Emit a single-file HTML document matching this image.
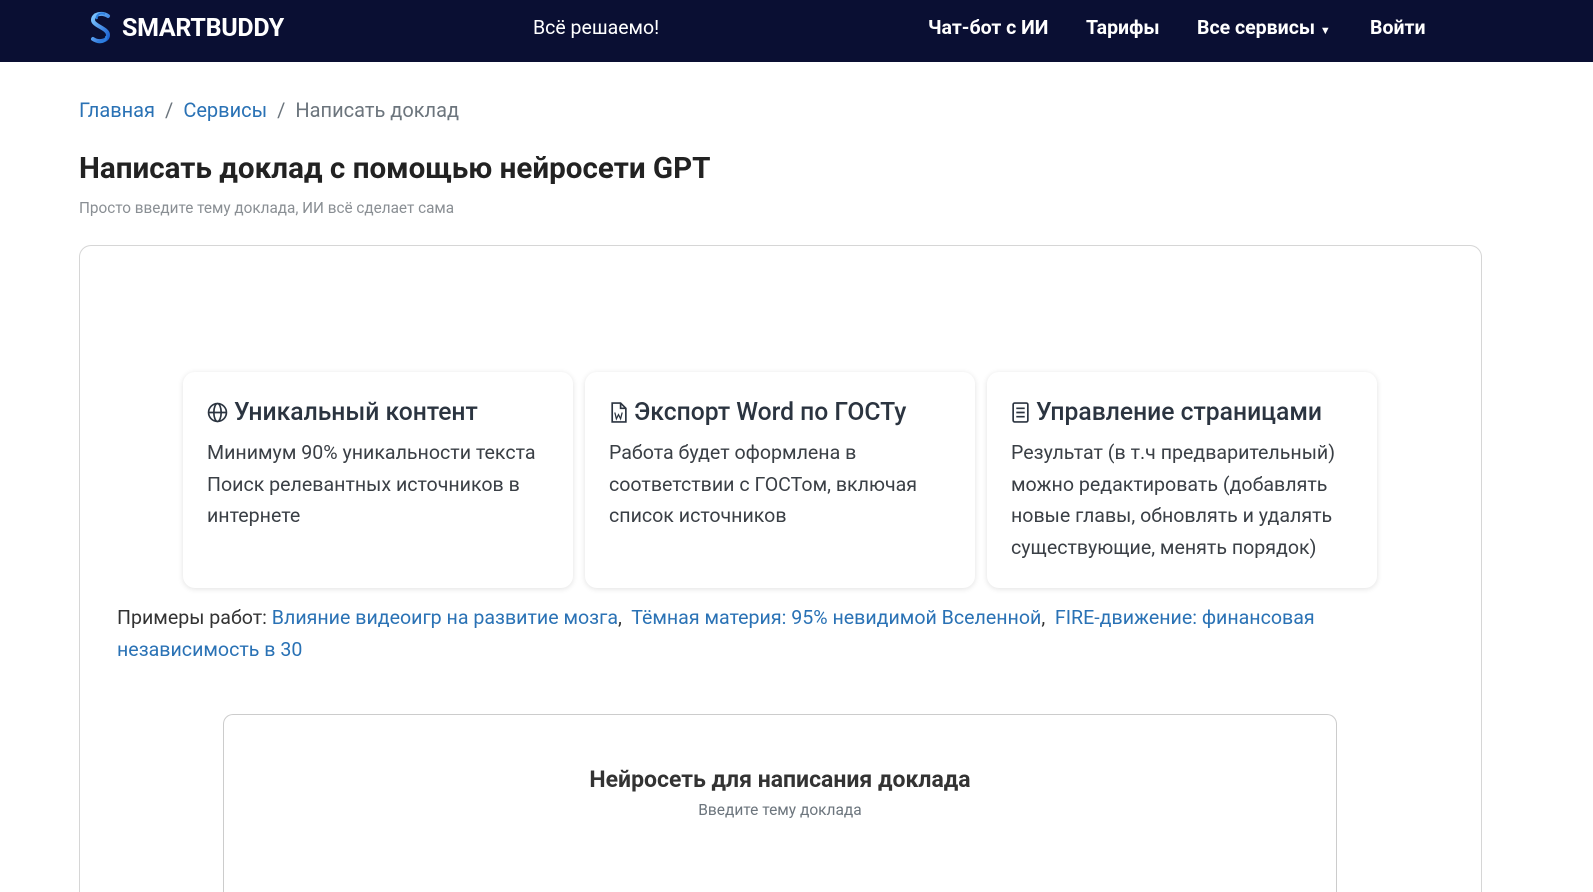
<!DOCTYPE html>
<html><head><meta charset="utf-8"><style>
*{box-sizing:border-box;margin:0;padding:0}
html{width:1593px;height:892px;overflow:hidden}
body{width:1593px;height:892px;overflow:hidden;background:#fff;font-family:"Roboto","Liberation Sans",sans-serif;color:#212529;position:relative}
.hdr{height:62px;background:#0a0f33;position:relative;color:#fff}
.hdr .logo{position:absolute;left:88px;top:11px;display:flex;align-items:center;font-weight:700;font-size:25px;letter-spacing:-0.3px}
.hdr .t{position:absolute;top:16px;font-size:19.5px}
.hdr b{font-weight:700}
.bc{position:absolute;left:79px;top:98px;font-size:20px;color:#6c757d}
.bc a{color:#2a72b5;text-decoration:none}
.bc span{margin:0 10px}
h1{position:absolute;left:79px;top:152px;font-size:29.6px;font-weight:700;color:#222}
.sub{position:absolute;left:79px;top:199px;font-size:15.3px;color:#8a8f94}
.box{position:absolute;left:79px;top:245px;width:1403px;height:647px;border:1px solid #d6d6d6;border-bottom:none;border-radius:12px 12px 0 0}
.card{position:absolute;top:372px;width:390px;height:216px;border-radius:12px;box-shadow:0 1px 6px rgba(0,0,0,.12);background:#fff;padding:26px 24px}
.card h3{font-size:24.7px;font-weight:500;color:#2b3440;display:flex;align-items:center;gap:6px;margin-bottom:10px}
.card p{font-size:19.6px;line-height:31.5px;color:#3a3f45}
.ex{position:absolute;left:117px;top:602px;width:1240px;font-size:19.6px;line-height:32px;color:#333}
.ex a{color:#2a72b5;text-decoration:none}
.inner{position:absolute;left:223px;top:714px;width:1114px;height:178px;border:1px solid #ccc;border-bottom:none;border-radius:10px 10px 0 0;text-align:center}
.inner h2{font-size:23px;font-weight:700;color:#333;margin-top:51px}
.inner div{font-size:15.5px;color:#6c757d;margin-top:8px}
</style></head><body>
<div class="hdr">
 <div class="logo"><svg width="26" height="34" viewBox="0 0 26 34"><defs><linearGradient id="g" x1="0" y1="0" x2="1" y2="1"><stop offset="0" stop-color="#7fc6ff"/><stop offset="1" stop-color="#1a5fd0"/></linearGradient></defs><path d="M20 5C14 1 5 3 5 9c0 6 15 8 15 15 0 6-9 8-15 4" fill="none" stroke="url(#g)" stroke-width="4" stroke-linecap="round"/><path d="M17 3C11 1 8 5 9 8M9 31c6 1 10-2 9-6" fill="none" stroke="#2d7fe0" stroke-width="2"/></svg><span style="margin-left:8px">SMARTBUDDY</span></div>
 <div class="t" style="left:533px">Всё решаемо!</div>
 <div class="t" style="left:928px"><b>Чат-бот с ИИ</b></div>
 <div class="t" style="left:1086px"><b>Тарифы</b></div>
 <div class="t" style="left:1197px"><b>Все сервисы</b> <span style="font-size:11px">▼</span></div>
 <div class="t" style="left:1370px"><b>Войти</b></div>
</div>
<div class="bc"><a>Главная</a><span>/</span><a>Сервисы</a><span>/</span>Написать доклад</div>
<h1>Написать доклад с помощью нейросети GPT</h1>
<div class="sub">Просто введите тему доклада, ИИ всё сделает сама</div>
<div class="box"></div>
<div class="card" style="left:183px"><h3><svg width="21" height="21" viewBox="0 0 20 20" fill="none" stroke="#2b3440" stroke-width="1.6"><circle cx="10" cy="10" r="8.5"/><ellipse cx="10" cy="10" rx="3.5" ry="8.5"/><path d="M1.5 10h17"/></svg>Уникальный контент</h3><p>Минимум 90% уникальности текста Поиск релевантных источников в интернете</p></div>
<div class="card" style="left:585px"><h3><svg width="19" height="21" viewBox="0 0 16 20" fill="none" stroke="#2b3440" stroke-width="1.6"><path d="M2 1h8l5 5v13H2z M10 1v5h5"/><path d="M4.5 10l1.5 6 2-4 2 4 1.5-6" stroke-width="1.2"/></svg>Экспорт Word по ГОСТу</h3><p>Работа будет оформлена в соответствии с ГОСТом, включая список источников</p></div>
<div class="card" style="left:987px"><h3><svg width="19" height="21" viewBox="0 0 16 20" fill="none" stroke="#2b3440" stroke-width="1.6"><rect x="1" y="1" width="14" height="18" rx="1.5"/><path d="M4 6h8M4 10h8M4 14h8"/></svg>Управление страницами</h3><p>Результат (в т.ч предварительный) можно редактировать (добавлять новые главы, обновлять и удалять существующие, менять порядок)</p></div>
<div class="ex">Примеры работ: <a>Влияние видеоигр на развитие мозга</a>,&nbsp; <a>Тёмная материя: 95% невидимой Вселенной</a>,&nbsp; <a>FIRE-движение: финансовая независимость в 30</a></div>
<div class="inner"><h2>Нейросеть для написания доклада</h2><div>Введите тему доклада</div></div>
</body></html>
